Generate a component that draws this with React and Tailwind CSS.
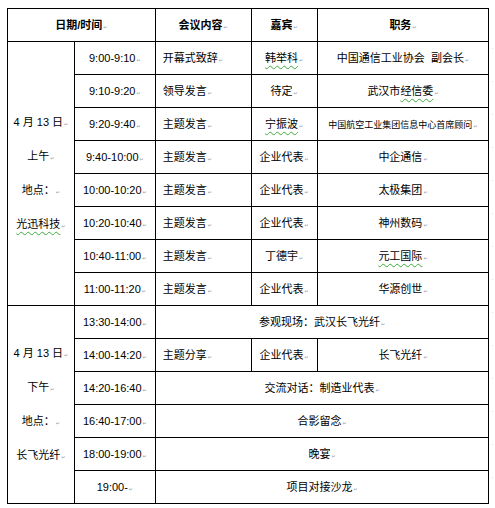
import React from "react";

const Mark = () => (
  <span className="ml-[1px] text-[5px] text-gray-400 font-['DejaVu_Sans',sans-serif] font-normal">↵</span>
);

const Wavy = ({ children }) => (
  <span className="underline decoration-wavy decoration-[#3cab3c] decoration-1 underline-offset-[3px]">{children}</span>
);

const cell = "border border-black p-0 text-center align-middle";

const Time = ({ children }) => (
  <td className={cell}>
    {children}
    <Mark />
  </td>
);

const Topic = ({ children }) => (
  <td className={cell + " text-left pl-[7px]"}>
    {children}
    <Mark />
  </td>
);

const Mid = ({ children, span, className = "" }) => (
  <td className={cell + " " + className} colSpan={span}>
    {children}
    <Mark />
  </td>
);

const EndMark = () => (
  <td className="border-0 p-0 align-top">
    <div className="pl-[2px] pt-[3px] text-[6px] leading-none text-gray-400">·</div>
  </td>
);

const Side = ({ lines }) => (
  <div className="flex flex-col items-center">
    {lines.map((l, i) => (
      <div key={i} className="leading-[32px]">
        {l}
        <Mark />
      </div>
    ))}
  </div>
);

const morning = [
  ["9:00-9:10", "开幕式致辞", <Wavy>韩举科</Wavy>, "中国通信工业协会  副会长"],
  ["9:10-9:20", "领导发言", "待定", <>武汉市<Wavy>经信委</Wavy></>],
  ["9:20-9:40", "主题发言", <Wavy>宁振波</Wavy>, <span className="text-[9px]">中国航空工业集团信息中心首席顾问</span>],
  ["9:40-10:00", "主题发言", "企业代表", "中企通信"],
  ["10:00-10:20", "主题发言", "企业代表", "太极集团"],
  ["10:20-10:40", "主题发言", "企业代表", "神州数码"],
  ["10:40-11:00", "主题发言", "丁德宇", <Wavy>元工国际</Wavy>],
  ["11:00-11:20", "主题发言", "企业代表", "华源创世"],
];

export default function App() {
  return (
    <div className="min-h-screen bg-white pl-[7px] pt-[8px] font-['Liberation_Sans','Noto_Sans_CJK_SC',sans-serif] text-[11px] text-black">
      <table className="table-fixed border-collapse">
        <colgroup>
          <col className="w-[67px]" />
          <col className="w-[81px]" />
          <col className="w-[96px]" />
          <col className="w-[66px]" />
          <col className="w-[172px]" />
          <col className="w-[6px]" />
        </colgroup>
        <tbody>
          <tr className="h-[33px] font-bold">
            <td className={cell} colSpan={2}>
              日期/时间<Mark />
            </td>
            <td className={cell}>
              会议内容<Mark />
            </td>
            <td className={cell}>
              嘉宾<Mark />
            </td>
            <td className={cell}>
              职务<Mark />
            </td>
            <td className="border-0 p-0" />
          </tr>
          {morning.map((r, i) => (
            <tr key={i} className="h-[33px]">
              {i === 0 && (
                <td className={cell} rowSpan={8}>
                  <Side lines={["4 月 13 日", "上午", "地点：", <Wavy>光迅科技</Wavy>]} />
                </td>
              )}
              <Time>{r[0]}</Time>
              <Topic>{r[1]}</Topic>
              <Mid>{r[2]}</Mid>
              <Mid className="whitespace-pre">{r[3]}</Mid>
              <EndMark />
            </tr>
          ))}
          <tr className="h-[33px]">
            <td className={cell} rowSpan={6}>
              <Side lines={["4 月 13 日", "下午", "地点：", "长飞光纤"]} />
            </td>
            <Time>13:30-14:00</Time>
            <Mid span={3}>参观现场：武汉长飞光纤</Mid>
            <EndMark />
          </tr>
          <tr className="h-[33px]">
            <Time>14:00-14:20</Time>
            <Topic>主题分享</Topic>
            <Mid>企业代表</Mid>
            <Mid>长飞光纤</Mid>
            <EndMark />
          </tr>
          <tr className="h-[33px]">
            <Time>14:20-16:40</Time>
            <Mid span={3}>交流对话：制造业代表</Mid>
            <EndMark />
          </tr>
          <tr className="h-[33px]">
            <Time>16:40-17:00</Time>
            <Mid span={3}>合影留念</Mid>
            <EndMark />
          </tr>
          <tr className="h-[33px]">
            <Time>18:00-19:00</Time>
            <Mid span={3}>晚宴</Mid>
            <EndMark />
          </tr>
          <tr className="h-[33px]">
            <Time>19:00-</Time>
            <Mid span={3}>项目对接沙龙</Mid>
            <EndMark />
          </tr>
        </tbody>
      </table>
    </div>
  );
}
